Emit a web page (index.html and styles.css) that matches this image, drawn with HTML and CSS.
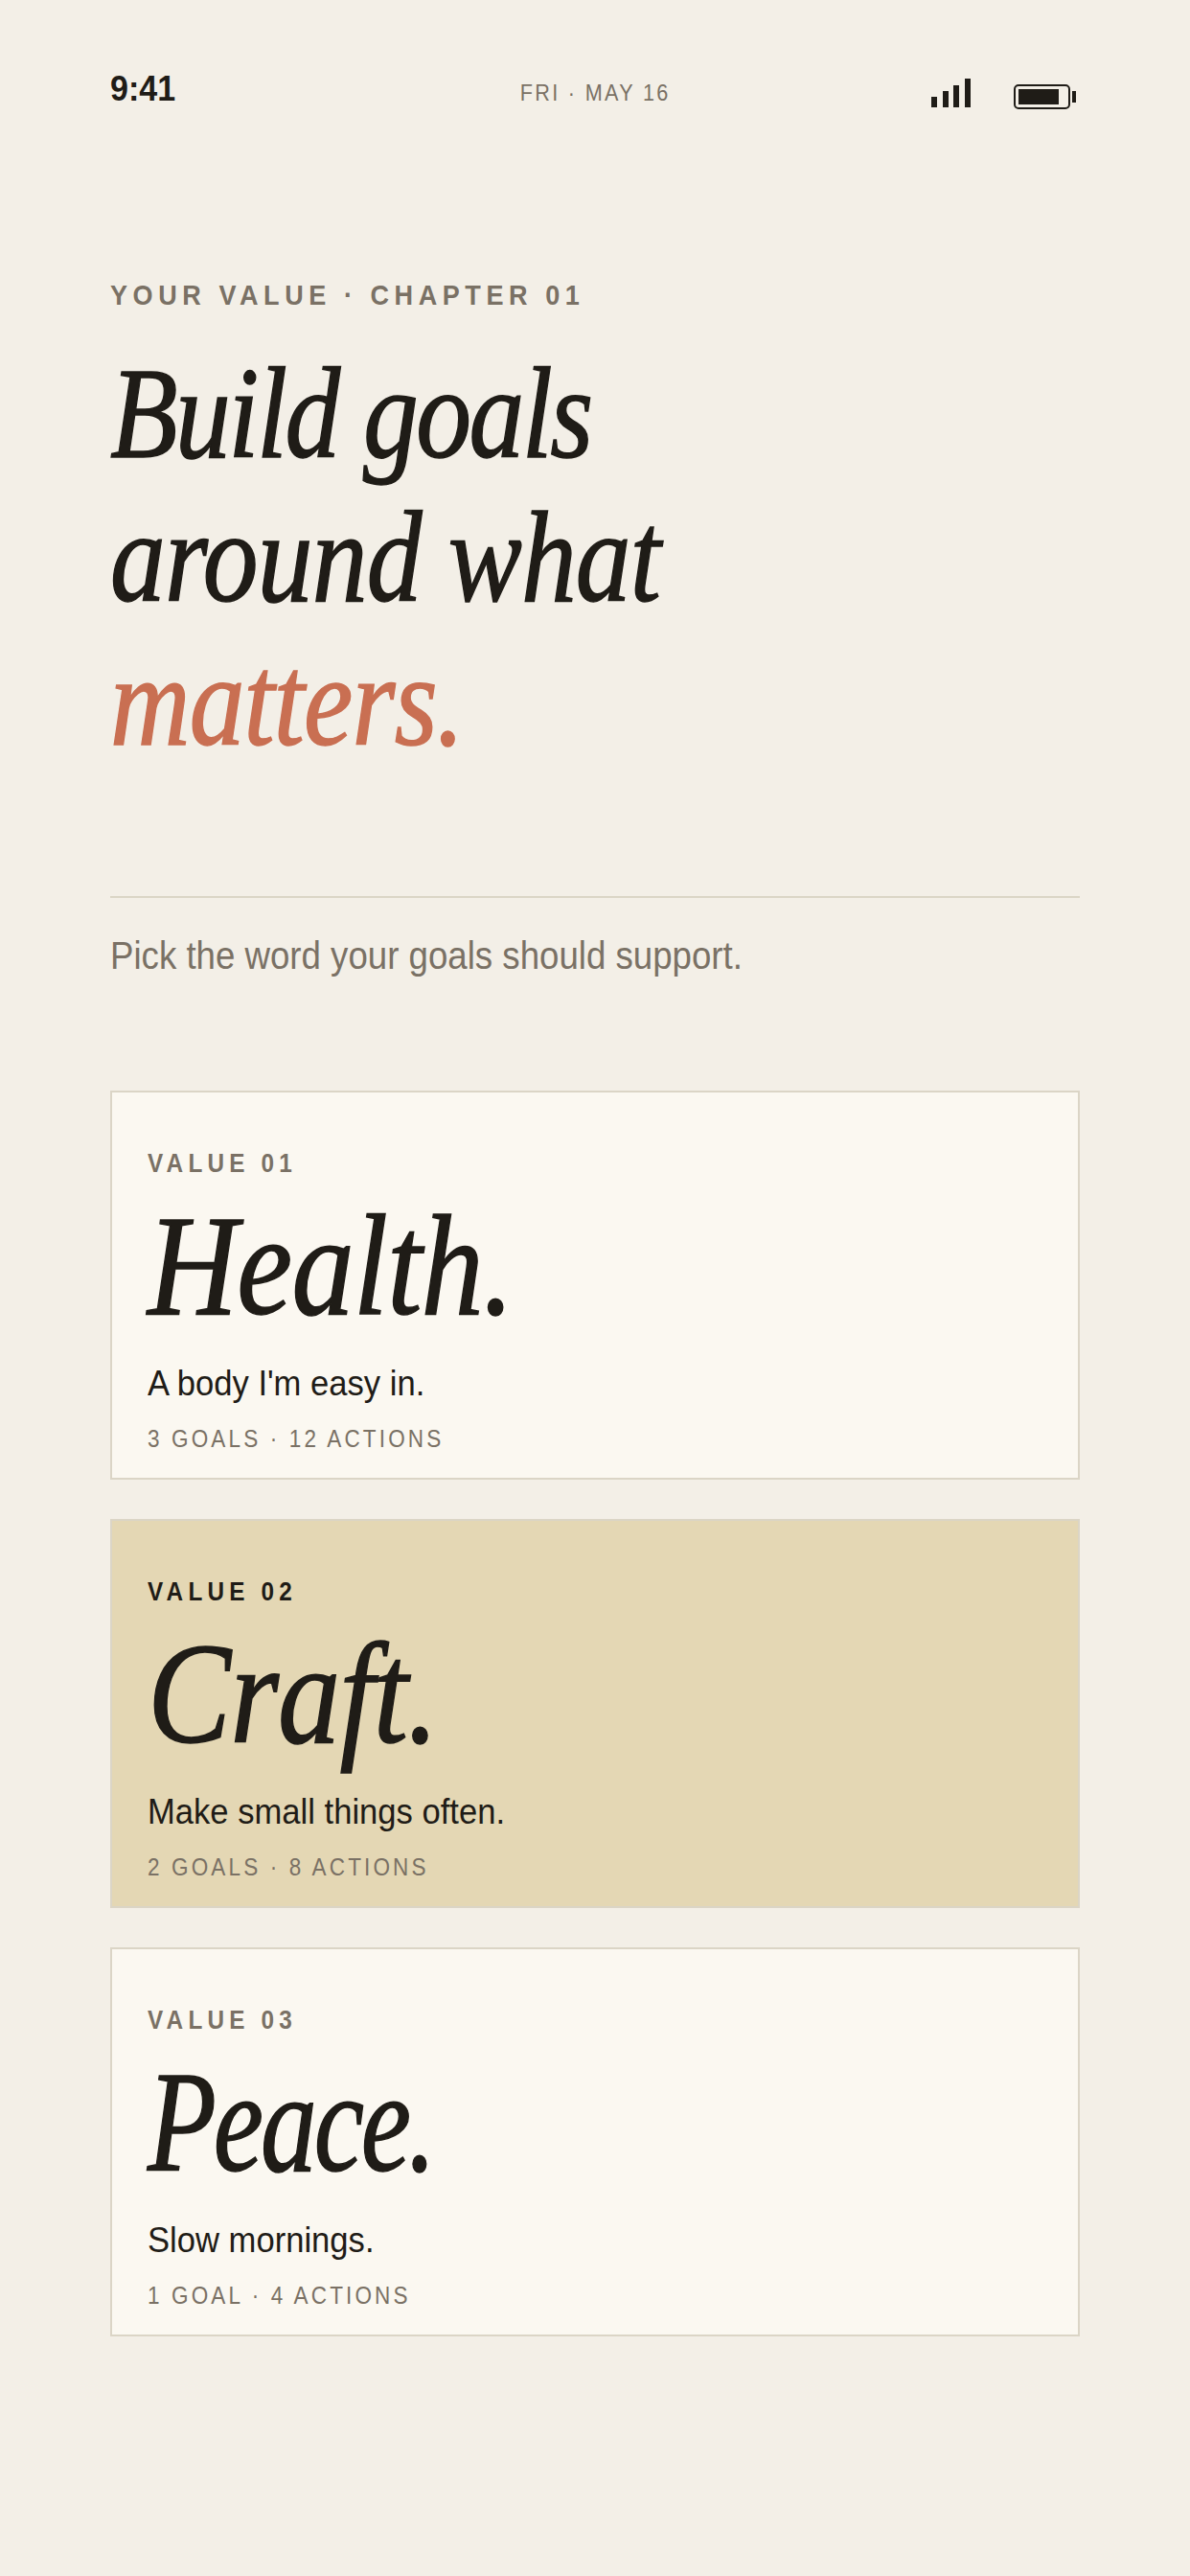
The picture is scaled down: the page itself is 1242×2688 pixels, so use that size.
FILE: index.html

```html
<!DOCTYPE html>
<html lang="en">
<head>
    <meta charset="UTF-8">
    <title>Your Value</title>
    <link rel="stylesheet" href="styles.css">
</head>
<body>
    <div class="page">
        <!-- Status bar -->
        <div class="status-bar">
            <span class="time">9:41</span>
            <span class="date">FRI · MAY 16</span>
            <div class="status-icons">
                <svg class="signal" width="41" height="30" viewBox="0 0 41 30">
                    <rect x="0" y="19" width="6" height="11" fill="#1f1c17"/>
                    <rect x="12" y="13" width="6" height="17" fill="#1f1c17"/>
                    <rect x="23" y="7" width="6" height="23" fill="#1f1c17"/>
                    <rect x="35" y="0" width="6" height="30" fill="#1f1c17"/>
                </svg>
                <svg class="battery" width="65" height="26" viewBox="0 0 65 26">
                    <rect x="1" y="1" width="57" height="24" rx="4" fill="none" stroke="#1f1c17" stroke-width="2"/>
                    <rect x="5" y="5" width="42" height="16" fill="#1f1c17"/>
                    <rect x="61" y="7" width="4" height="12" fill="#1f1c17"/>
                </svg>
            </div>
        </div>

        <!-- Heading -->
        <div class="eyebrow">YOUR VALUE · CHAPTER 01</div>
        <h1 class="title">
            <span class="title-line first">Build goals</span>
            <span class="title-line">around what</span>
            <span class="title-line accent">matters.</span>
        </h1>

        <div class="divider"></div>
        <div class="intro">Pick the word your goals should support.</div>

        <!-- Value cards -->
        <div class="cards">
            <div class="card">
                <div class="card-label">VALUE 01</div>
                <div class="card-word">Health.</div>
                <div class="card-line">A body I'm easy in.</div>
                <div class="card-meta">3 GOALS · 12 ACTIONS</div>
            </div>
            <div class="card selected">
                <div class="card-label">VALUE 02</div>
                <div class="card-word">Craft.</div>
                <div class="card-line">Make small things often.</div>
                <div class="card-meta">2 GOALS · 8 ACTIONS</div>
            </div>
            <div class="card">
                <div class="card-label">VALUE 03</div>
                <div class="card-word peace">Peace.</div>
                <div class="card-line">Slow mornings.</div>
                <div class="card-meta">1 GOAL · 4 ACTIONS</div>
            </div>
        </div>
    </div>
</body>
</html>
```

FILE: styles.css

```css
* {
    box-sizing: border-box;
}
body {
    margin: 0;
    background: #f3efe7;
    color: #1f1c17;
    font-family: "Liberation Sans", Arial, sans-serif;
}
.page {
    width: 1242px;
    height: 2688px;
    padding: 72px 115px 0;
}
.status-bar {
    display: grid;
    grid-template-columns: 1fr auto 1fr;
    align-items: end;
    height: 42px;
}
.time {
    font-size: 37px;
    line-height: 42px;
    font-weight: 700;
    align-self: start;
    transform: scaleX(0.92);
    transform-origin: left center;
}
.date {
    font-size: 24px;
    line-height: 34px;
    letter-spacing: 2.6px;
    color: #7a7165;
    transform: scaleX(0.9);
}
.status-icons {
    display: flex;
    justify-content: flex-end;
    align-items: flex-end;
    gap: 45px;
    padding-right: 4px;
}
.signal {
    margin-bottom: 2px;
}
.eyebrow {
    margin-top: 176px;
    font-size: 30px;
    line-height: 36px;
    font-weight: 700;
    letter-spacing: 6.2px;
    color: #7a7165;
    transform: scaleX(0.9);
    transform-origin: left center;
}
.title {
    margin: 30px 0 0;
    font-family: "Liberation Serif", serif;
    font-style: italic;
    font-weight: 400;
    font-size: 136px;
    line-height: 150px;
    letter-spacing: -1px;
    -webkit-text-stroke: 1.5px currentColor;
    transform: scaleX(0.85);
    transform-origin: left center;
}
.title-line {
    display: block;
}
.title-line.first {
    letter-spacing: -3px;
}
.title-line.accent {
    color: #c96f52;
}
.divider {
    margin-top: 129px;
    height: 2px;
    background: #dbd5c6;
}
.intro {
    margin-top: 37px;
    font-size: 40px;
    line-height: 46px;
    color: #7a7165;
    transform: scaleX(0.916);
    transform-origin: left center;
}
.cards {
    display: flex;
    flex-direction: column;
    gap: 41px;
    margin-top: 118px;
}
.card {
    height: 406px;
    padding: 58px 37px 0;
    background: #fbf8f1;
    border: 2px solid #dbd5c6;
}
.card.selected {
    background: #e4d7b4;
}
.card-label {
    font-size: 27px;
    line-height: 32px;
    font-weight: 700;
    letter-spacing: 5.8px;
    color: #7a7165;
    transform: scaleX(0.9);
    transform-origin: left center;
}
.card.selected .card-label {
    color: #1f1c17;
}
.card-word {
    margin-top: 15px;
    font-family: "Liberation Serif", serif;
    font-style: italic;
    font-size: 150px;
    line-height: 150px;
    letter-spacing: -1px;
    -webkit-text-stroke: 1.5px currentColor;
    transform: scaleX(0.87);
    transform-origin: left center;
}
.card-word.peace {
    letter-spacing: -4px;
    transform: scaleX(0.785);
}
.card-line {
    margin-top: 27px;
    font-size: 37px;
    line-height: 44px;
    transform: scaleX(0.935);
    transform-origin: left center;
}
.card-meta {
    margin-top: 20px;
    font-size: 25px;
    line-height: 30px;
    letter-spacing: 3.5px;
    color: #7a7165;
    transform: scaleX(0.9);
    transform-origin: left center;
}
```
